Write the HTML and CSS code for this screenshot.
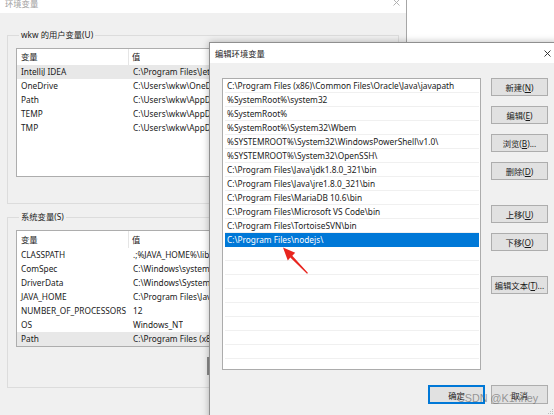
FILE: index.html
```html
<!DOCTYPE html>
<html lang="zh-CN">
<head>
<meta charset="utf-8">
<title>编辑环境变量</title>
<link rel="stylesheet" href="styles.css">
</head>
<body>
<div class="win back">
  <div class="titlebar">
    <span class="title">环境变量</span>
    <span class="close"><svg width="7" height="7" viewBox="0 0 7 7"><path d="M0.5 0.5 L6.5 6.5 M6.5 0.5 L0.5 6.5" stroke="#aaa" stroke-width="0.9" fill="none"/></svg></span>
  </div>
  <div class="body">
    <fieldset class="group group-user">
      <legend>wkw 的用户变量(U)</legend>
      <div class="lv lv-user">
        <div class="lv-head"><div class="c1">变量</div><div class="c2">值</div></div>
        <div class="lv-row hl"><div class="c1">IntelliJ IDEA</div><div class="c2">C:\Program Files\JetBrains\IntelliJ IDEA 2021.3\bin;</div></div>
        <div class="lv-row"><div class="c1">OneDrive</div><div class="c2">C:\Users\wkw\OneDrive</div></div>
        <div class="lv-row"><div class="c1">Path</div><div class="c2">C:\Users\wkw\AppData\Local\Microsoft\WindowsApps;</div></div>
        <div class="lv-row"><div class="c1">TEMP</div><div class="c2">C:\Users\wkw\AppData\Local\Temp</div></div>
        <div class="lv-row"><div class="c1">TMP</div><div class="c2">C:\Users\wkw\AppData\Local\Temp</div></div>
      </div>
    </fieldset>
    <fieldset class="group group-sys">
      <legend>系统变量(S)</legend>
      <div class="lv lv-sys">
        <div class="lv-head"><div class="c1">变量</div><div class="c2">值</div></div>
        <div class="lv-row"><div class="c1">CLASSPATH</div><div class="c2">.;%JAVA_HOME%\lib;%JAVA_HOME%\lib\tools.jar</div></div>
        <div class="lv-row"><div class="c1">ComSpec</div><div class="c2">C:\Windows\system32\cmd.exe</div></div>
        <div class="lv-row"><div class="c1">DriverData</div><div class="c2">C:\Windows\System32\Drivers\DriverData</div></div>
        <div class="lv-row"><div class="c1">JAVA_HOME</div><div class="c2">C:\Program Files\Java\jdk1.8.0_321</div></div>
        <div class="lv-row"><div class="c1">NUMBER_OF_PROCESSORS</div><div class="c2">12</div></div>
        <div class="lv-row"><div class="c1">OS</div><div class="c2">Windows_NT</div></div>
        <div class="lv-row hl"><div class="c1">Path</div><div class="c2">C:\Program Files (x86)\Common Files\Oracle\Java\javapath;</div></div>
      </div>
    </fieldset>
  </div>
  <div class="thumb"></div>
</div>

<div class="win dialog">
  <div class="d-title">
    <span class="title">编辑环境变量</span>
    <span class="close"><svg width="7" height="7" viewBox="0 0 7 7"><path d="M0.5 0.5 L6.5 6.5 M6.5 0.5 L0.5 6.5" stroke="#222" stroke-width="0.9" fill="none"/></svg></span>
  </div>
  <div class="d-body">
    <div class="d-main">
      <div class="d-list">
        <div class="d-row">C:\Program Files (x86)\Common Files\Oracle\Java\javapath</div>
        <div class="d-row">%SystemRoot%\system32</div>
        <div class="d-row">%SystemRoot%</div>
        <div class="d-row">%SystemRoot%\System32\Wbem</div>
        <div class="d-row">%SYSTEMROOT%\System32\WindowsPowerShell\v1.0\</div>
        <div class="d-row">%SYSTEMROOT%\System32\OpenSSH\</div>
        <div class="d-row">C:\Program Files\Java\jdk1.8.0_321\bin</div>
        <div class="d-row">C:\Program Files\Java\jre1.8.0_321\bin</div>
        <div class="d-row">C:\Program Files\MariaDB 10.6\bin</div>
        <div class="d-row">C:\Program Files\Microsoft VS Code\bin</div>
        <div class="d-row">C:\Program Files\TortoiseSVN\bin</div>
        <div class="d-row sel">C:\Program Files\nodejs\</div>
        <div class="d-row"></div>
        <div class="d-row"></div>
        <div class="d-row"></div>
        <div class="d-row"></div>
        <div class="d-row"></div>
        <div class="d-row"></div>
        <div class="d-row"></div>
        <div class="d-row"></div>
        <div class="d-row"></div>
      </div>
      <div class="d-buttons">
        <div class="btn">新建(<u>N</u>)</div>
        <div class="btn">编辑(<u>E</u>)</div>
        <div class="btn">浏览(<u>B</u>)...</div>
        <div class="btn">删除(<u>D</u>)</div>
        <div class="btn gap-lg">上移(<u>U</u>)</div>
        <div class="btn">下移(<u>O</u>)</div>
        <div class="btn gap-lg">编辑文本(<u>T</u>)...</div>
      </div>
    </div>
    <div class="d-foot">
      <div class="btn btn-lg btn-default">确定</div>
      <div class="btn btn-lg">取消</div>
    </div>
  </div>
</div>

<svg class="arrow" width="554" height="415" viewBox="0 0 554 415">
  <polygon points="283,247.5 295.2,252.8 292.3,255.7 308,273 307,273.8 290.3,257.5 287.8,260.6" fill="#e8251f"/>
</svg>
<svg class="grip" width="6" height="6" viewBox="0 0 6 6">
  <rect x="4" y="0" width="1" height="1" fill="#bbb"/>
  <rect x="2" y="2" width="1" height="1" fill="#bbb"/>
  <rect x="4" y="2" width="1" height="1" fill="#bbb"/>
  <rect x="0" y="4" width="1" height="1" fill="#bbb"/>
  <rect x="2" y="4" width="1" height="1" fill="#bbb"/>
  <rect x="4" y="4" width="1" height="1" fill="#bbb"/>
</svg>
<div class="watermark">CSDN @K1nney</div>
</body>
</html>
```

FILE: styles.css
```css
* { box-sizing: border-box; }
html, body { margin: 0; padding: 0; }
body {
  width: 554px;
  height: 415px;
  overflow: hidden;
  position: relative;
  background: #ffffff;
  font-family: "Noto Sans", "Noto Sans CJK SC", sans-serif;
  font-size: 8.3px;
  color: #1a1a1a;
}

.win {
  position: absolute;
  display: flex;
  flex-direction: column;
  background: #f0f0f0;
}

/* ---------- back window ---------- */
.back {
  left: 0;
  top: -7px;
  width: 407px;
  height: 430px;
  border-right: 1px solid #a6a6a6;
}
.back .titlebar {
  height: 20px;
  flex: none;
  background: #ffffff;
  display: flex;
  align-items: center;
  justify-content: space-between;
  padding-left: 5px;
  color: #a0a0a0;
}
.back .titlebar .close { padding-bottom: 2px; }
.close {
  width: 20px;
  height: 100%;
  display: flex;
  align-items: center;
  justify-content: center;
}
.back .body {
  padding: 16px 0 0 7px;
}
.group {
  margin: 0;
  width: 392px;
  min-width: 0;
  border: 1px solid #dcdcdc;
  padding: 0;
}
.group legend {
  margin-left: 3px;
  padding: 0 2px;
  line-height: 12px;
  color: #1a1a1a;
}
.group-user { padding: 7px 0 26px 8px; }
.group-sys { margin-top: 7px; padding: 7px 0 40px 8px; }

.lv {
  width: 380px;
  background: #ffffff;
  border: 1px solid #adadad;
  overflow: hidden;
}
.lv-user { height: 129px; }
.lv-sys { height: 117px; }
.lv-head, .lv-row {
  display: flex;
  white-space: nowrap;
}
.lv-head { height: 16px; line-height: 16px; }
.lv-sys .lv-head { height: 17px; line-height: 17px; }
.lv-row { height: 14px; line-height: 14px; }
.c1 {
  width: 112px;
  flex: none;
  padding-left: 4px;
  overflow: hidden;
}
.lv-head .c1 { border-right: 1px solid #e5e5e5; }
.c2 {
  padding-left: 3px;
  overflow: hidden;
}
.lv-row .c2 { padding-left: 4px; }
.lv-row.hl { background: #e8e8e8; }
.thumb {
  position: absolute;
  left: 207px;
  top: 364px;
  width: 2px;
  height: 18px;
  background: #8a8a8a;
}

/* ---------- edit dialog ---------- */
.dialog {
  left: 209px;
  top: 42px;
  width: 349px;
  height: 380px;
  border: 1px solid #8f8f8f;
  box-shadow: 0 0 7px rgba(0, 0, 0, 0.28);
}
.d-title {
  height: 20px;
  flex: none;
  background: #ffffff;
  display: flex;
  align-items: center;
  justify-content: space-between;
  padding-left: 5px;
  color: #1a1a1a;
}
.d-body {
  padding: 15px 9px 0 12px;
}
.d-main {
  display: flex;
  gap: 10px;
}
.d-list {
  width: 259px;
  height: 292px;
  flex: none;
  background: #ffffff;
  border: 1px solid #acacac;
  overflow: hidden;
}
.d-row {
  height: 14px;
  line-height: 13px;
  margin: 0 1px 0 2px;
  padding-left: 2px;
  border-bottom: 1px solid #f0f0f0;
  white-space: nowrap;
  overflow: hidden;
}
.d-row.sel {
  background: #0078d7;
  color: #ffffff;
  border-bottom-color: #0078d7;
}
.d-buttons {
  width: 57px;
  display: flex;
  flex-direction: column;
  gap: 10px;
}
.btn {
  height: 18px;
  flex: none;
  border: 1px solid #adadad;
  background: #e1e1e1;
  display: flex;
  align-items: center;
  justify-content: center;
  white-space: nowrap;
  color: #1a1a1a;
}
.btn u { text-underline-offset: 1px; }
.gap-lg { margin-top: 15px; }
.d-foot {
  display: flex;
  justify-content: flex-end;
  gap: 6px;
  margin-top: 15px;
}
.btn-lg { width: 57px; height: 19px; }
.btn-default {
  border-color: #0078d7;
  box-shadow: inset 0 0 0 1px #0078d7;
}

/* ---------- overlays ---------- */
.arrow {
  position: absolute;
  left: 0;
  top: 0;
  pointer-events: none;
}
.grip {
  position: absolute;
  left: 548px;
  top: 409px;
}
.watermark {
  position: absolute;
  left: 457px;
  top: 392px;
  font-family: "Liberation Sans", Arial, sans-serif;
  font-size: 10.8px;
  line-height: 12px;
  color: rgba(80, 80, 80, 0.55);
  white-space: nowrap;
}
```
